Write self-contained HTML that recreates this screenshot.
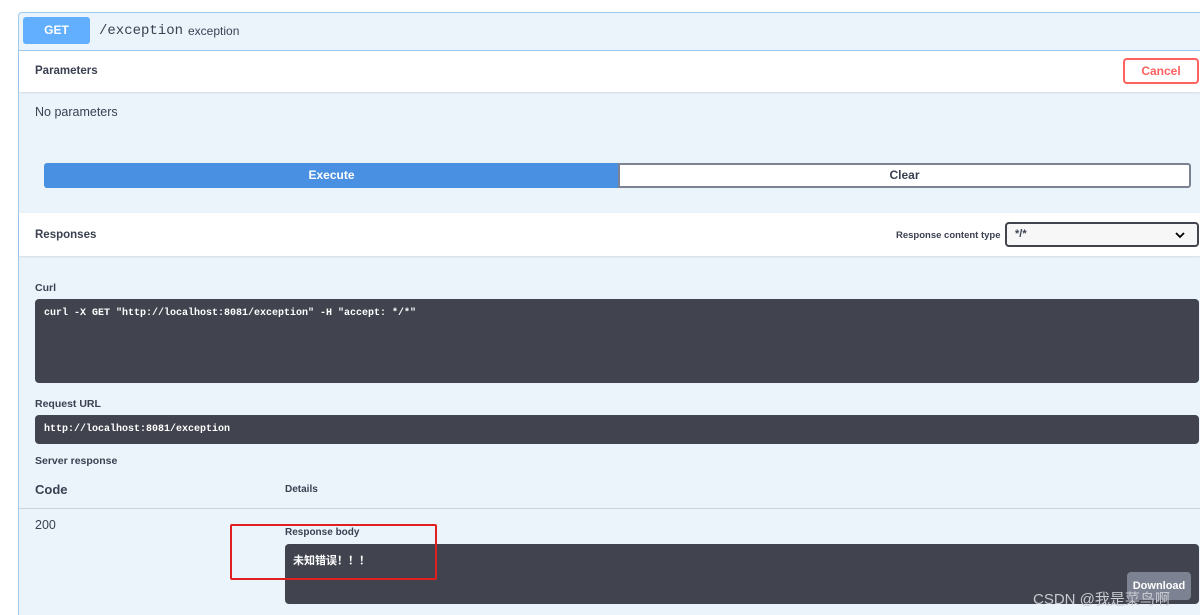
<!DOCTYPE html>
<html><head><meta charset="utf-8"><style>
*{margin:0;padding:0;box-sizing:border-box}
html,body{width:1200px;height:615px;overflow:hidden}
body{background:#fff;font-family:"Liberation Sans","Noto Sans CJK SC",sans-serif;color:#3b4151;position:relative}
.a{position:absolute}
.b{font-weight:bold}
.mono{font-family:"Liberation Mono",monospace}
.dark{background:#41444e;border-radius:4px}
</style></head><body>
<div class="a" style="left:18px;top:12px;width:1182px;height:603px;background:#ebf3fb;border:1px solid #9fcaf0;border-right:none;border-bottom:none;border-radius:4px 0 0 0"></div>
<div class="a b" style="left:23px;top:17px;width:67px;height:27px;background:#61affe;border-radius:3px;color:#fff;font-size:12px;text-align:center;line-height:27px">GET</div>
<div class="a mono" style="left:99px;top:23px;font-size:14px;color:#3b4151">/exception</div>
<div class="a" style="left:188px;top:24px;font-size:12px">exception</div>
<div class="a" style="left:19px;top:50px;width:1181px;height:42px;background:#fff;border-top:1px solid #9fcaf0;box-shadow:0 1px 2px rgba(0,0,0,.1)"></div>
<div class="a b" style="left:35px;top:65px;font-size:11.5px">Parameters</div>
<div class="a b" style="left:1123px;top:58px;width:76px;height:26px;border:2px solid #ff6060;border-radius:4px;color:#ff6060;font-size:12px;text-align:center;line-height:22px;background:#fff">Cancel</div>
<div class="a" style="left:35px;top:105px;font-size:12.5px">No parameters</div>
<div class="a b" style="left:44px;top:163px;width:575px;height:25px;background:#4990e2;color:#fff;font-size:12px;text-align:center;line-height:25px;border-radius:3px 0 0 3px">Execute</div>
<div class="a b" style="left:618px;top:163px;width:573px;height:25px;border:2px solid #7d8293;color:#3b4151;font-size:12px;text-align:center;line-height:21px;border-radius:0 3px 3px 0;background:#fff">Clear</div>
<div class="a" style="left:19px;top:213px;width:1181px;height:43px;background:#fff;box-shadow:0 1px 2px rgba(0,0,0,.1)"></div>
<div class="a b" style="left:35px;top:229px;font-size:11.5px">Responses</div>
<div class="a b" style="left:896px;top:230px;font-size:9.5px">Response content type</div>
<div class="a b" style="left:1005px;top:222px;width:194px;height:25px;border:2px solid #41444e;border-radius:4px;background:#f7f7f7;font-size:11px;padding:4px 8px">*/*
<svg class="a" style="right:12px;top:8px" width="10" height="7" viewBox="0 0 10 7"><path d="M1 1l4 4 4-4" stroke="#000" stroke-width="1.8" fill="none"/></svg></div>
<div class="a b" style="left:35px;top:282px;font-size:10.5px">Curl</div>
<div class="a dark" style="left:35px;top:299px;width:1164px;height:84px"></div>
<div class="a mono b" style="left:44px;top:308px;font-size:10px;color:#fff">curl -X GET "http://localhost:8081/exception" -H "accept: */*"</div>
<div class="a b" style="left:35px;top:398px;font-size:10.5px">Request URL</div>
<div class="a dark" style="left:35px;top:415px;width:1164px;height:29px"></div>
<div class="a mono b" style="left:44px;top:424px;font-size:10px;color:#fff">http://localhost:8081/exception</div>
<div class="a b" style="left:35px;top:455px;font-size:10.5px">Server response</div>
<div class="a b" style="left:35px;top:482px;font-size:13px">Code</div>
<div class="a b" style="left:285px;top:484px;font-size:10px">Details</div>
<div class="a" style="left:19px;top:508px;width:1181px;height:1px;background:#cdd3db"></div>
<div class="a" style="left:35px;top:518px;font-size:12.5px">200</div>
<div class="a b" style="left:285px;top:527px;font-size:10px">Response body</div>
<div class="a dark" style="left:285px;top:544px;width:914px;height:60px"></div>
<div class="a b" style="left:293px;top:552px;font-size:11px;color:#fff">未知错误！！！</div>
<div class="a b" style="left:1127px;top:572px;width:64px;height:28px;background:#7d8293;border-radius:4px;color:#fff;font-size:11px;text-align:center;line-height:28px">Download</div>
<div class="a" style="left:1033px;top:588px;font-size:15px;color:#c8cad0">CSDN @我是菜鸟啊</div>
<div class="a" style="left:230px;top:524px;width:207px;height:56px;border:2px solid #e02020;border-radius:2px"></div>
</body></html>
